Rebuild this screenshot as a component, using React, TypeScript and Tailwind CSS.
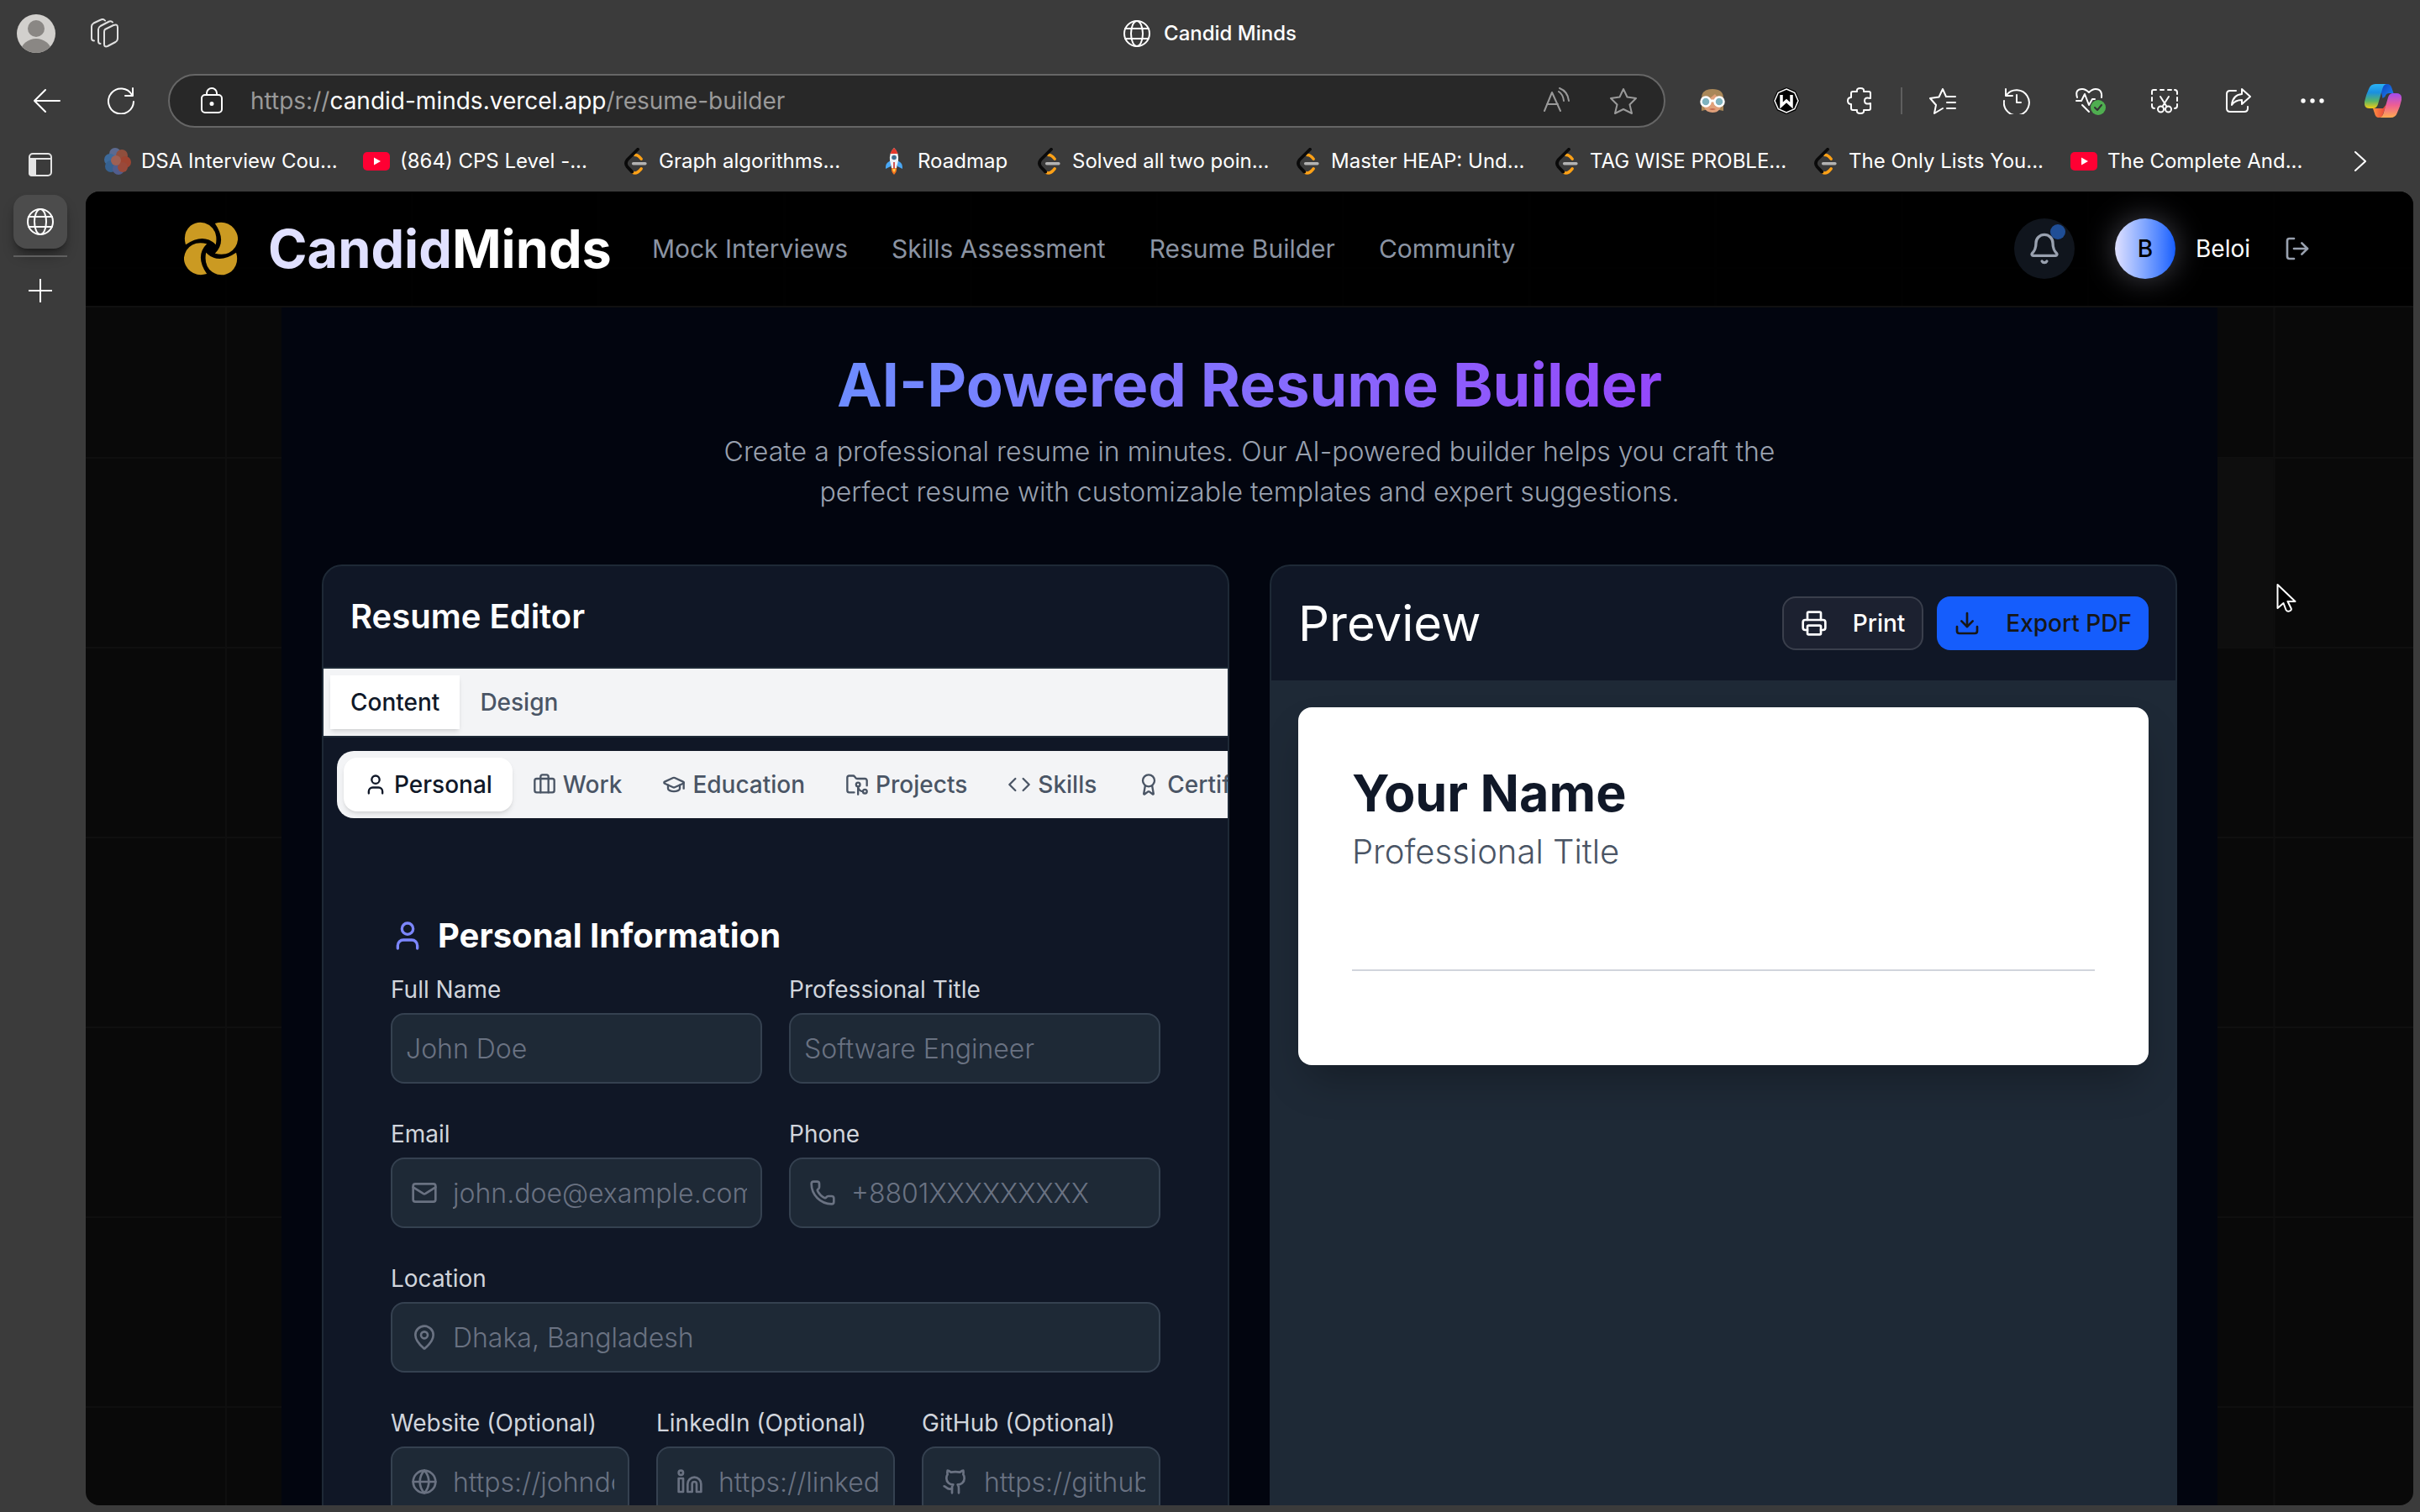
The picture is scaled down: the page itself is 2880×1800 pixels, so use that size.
import React, { useId } from 'react';
import type { ReactNode } from 'react';
import {
  Award,
  Bell,
  Briefcase,
  Code,
  Download,
  FolderGit2,
  Github,
  Globe,
  GraduationCap,
  Linkedin,
  LogOut,
  Mail,
  MapPin,
  Phone,
  Printer,
  User,
} from 'lucide-react';
import type { LucideIcon } from 'lucide-react';

interface IconProps {
  className?: string;
}

/* ---------- browser icons ---------- */

const LineIcon = ({ className = 'size-8', children }: { className?: string; children: ReactNode }) => (
  <svg
    viewBox="0 0 32 32"
    className={className}
    fill="none"
    stroke="currentColor"
    strokeWidth="2"
    strokeLinecap="round"
    strokeLinejoin="round"
    aria-hidden="true"
  >
    {children}
  </svg>
);

const GlobeIcon = ({ className }: IconProps) => (
  <LineIcon className={className}>
    <circle cx="16" cy="16" r="15" />
    <ellipse cx="16" cy="16" rx="7" ry="15" />
    <path d="M2 10h28M2 22h28" />
  </LineIcon>
);

const StackIcon = () => (
  <svg viewBox="0 0 36 36" className="size-9" fill="none" stroke="#e0e0e0" strokeWidth="2" strokeLinejoin="round" strokeLinecap="round" aria-hidden="true">
    <path d="M19 13 29 8q5-2 5 2.500v13q0 3-2.500 4.500L22 33q-4 1.500-4-2.500V16q0-2 1-3Z" />
    <path d="M13.500 30q-2.500 0-2.500-3V13q0-2.500 2.500-4L24 3.500q2.500-1 4 1" />
    <path d="M6 26.500q-3 0-3-3V9.500Q3 7 5.500 5.500L14 1.500q3-1.500 5 1" />
  </svg>
);

const AvatarIcon = () => (
  <svg viewBox="0 0 46 46" className="size-[46px]" aria-hidden="true">
    <clipPath id="avatar-clip">
      <circle cx="23" cy="23" r="23" />
    </clipPath>
    <g clipPath="url(#avatar-clip)">
      <rect width="46" height="46" fill="#d2d0cd" />
      <circle cx="23" cy="17" r="10" fill="#8a8784" />
      <ellipse cx="23" cy="44" rx="18" ry="15" fill="#8a8784" />
    </g>
  </svg>
);

const LeetCodeIcon = () => (
  <svg viewBox="-8 0 94 94" className="size-8 shrink-0" fill="none" strokeLinecap="round" strokeLinejoin="round" aria-hidden="true">
    <path d="M38 25q10-2 22 14M30 86q14 8 30-13" stroke="#ffa116" strokeWidth="10" />
    <path d="M48 5 11 42q-9 12 0 24l17 18" stroke="#0a0a0a" strokeWidth="11" />
    <path d="M32 55h42" stroke="#b3b3b3" strokeWidth="10" />
  </svg>
);

const YouTubeIcon = () => (
  <svg viewBox="0 0 32 32" className="size-8 shrink-0" aria-hidden="true">
    <rect y="5" width="32" height="22" rx="5" fill="#ff0033" />
    <path d="M13 11.500v9l8-4.500z" fill="#fff" />
  </svg>
);

const RocketIcon = () => (
  <svg viewBox="0 0 32 32" className="size-8 shrink-0" aria-hidden="true">
    <path d="M9 17c-3 2-3 5-3 8l6-3V15zM23 17c3 2 3 5 3 8l-6-3V15z" fill="#4aa8f5" />
    <path d="M13 23h6q1 5-3 9-4-4-3-9z" fill="#f5731d" />
    <path d="M14.500 24h3q.500 3-1.500 5-2-2-1.500-5z" fill="#ffd24d" />
    <path d="M16 0q6 6 5 15l-2 9h-6l-2-9Q10 6 16 0z" fill="#eef1f5" />
    <path d="M16 0q3.500 3 4.500 7h-9Q12.500 3 16 0z" fill="#e5392c" />
    <circle cx="16" cy="11.500" r="2.800" fill="#3f6d8f" />
    <path d="M15.200 17h1.600v8h-1.600z" fill="#c9302c" />
  </svg>
);

const FlowerIcon = () => (
  <svg viewBox="0 0 32 32" className="size-8 shrink-0" aria-hidden="true">
    <g opacity="0.7">
      <circle cx="13" cy="7" r="7" fill="#6a7fb5" />
      <circle cx="21" cy="9" r="7" fill="#b5583f" />
      <circle cx="25" cy="17" r="7" fill="#c9482e" />
      <circle cx="7" cy="14" r="7" fill="#3f7fc4" />
      <circle cx="8" cy="22" r="7" fill="#3572b5" />
      <circle cx="17" cy="25" r="7" fill="#5b6cb0" />
      <circle cx="22" cy="23" r="6" fill="#c2503a" />
      <circle cx="14" cy="15" r="6" fill="#c8705f" />
    </g>
  </svg>
);

const GlassesIcon = () => (
  <svg viewBox="0 0 32 32" className="size-8" aria-hidden="true">
    <path d="M3 28V13Q3 2 16 2t13 11v15l-5-1H7z" fill="#a98758" />
    <path d="M5 17q5-1 14-9 3 5 8 8 0 14-11 14T5 17z" fill="#e0a07a" />
    <path d="M12 26q4 2 8 0-4-2-8 0z" fill="#c56a4e" />
    <circle cx="8" cy="17" r="5.500" fill="#7fb3bf" stroke="#fff" strokeWidth="2.500" />
    <circle cx="24" cy="17" r="5.500" fill="#7fb3bf" stroke="#fff" strokeWidth="2.500" />
    <path d="M13 16h6" stroke="#fff" strokeWidth="3" />
  </svg>
);

const WappalIcon = () => (
  <svg viewBox="0 0 32 32" className="size-8" aria-hidden="true">
    <path d="M16 0l11 4.500L32 16l-5 11.500L16 32 5 27.500 0 16 5 4.500z" fill="#000" />
    <path d="M16 2l9.700 4.200L30 16l-4.300 9.800L16 30l-9.700-4.200L2 16l4.300-9.800z" fill="#000" stroke="#fff" strokeWidth="1.500" />
    <path d="M10 9v12.500l6-5.500 6 5.500V9" fill="none" stroke="#fff" strokeWidth="3.500" />
  </svg>
);

const CopilotIcon = () => (
  <svg viewBox="0 0 44 40" className="h-10 w-11" aria-hidden="true">
    <defs>
      <linearGradient id="cp-left" x1="0" y1="0" x2="0" y2="1">
        <stop offset="0" stopColor="#2bb3f5" />
        <stop offset="0.350" stopColor="#1a8fe0" />
        <stop offset="0.700" stopColor="#58b368" />
        <stop offset="1" stopColor="#f5cc12" />
      </linearGradient>
      <linearGradient id="cp-right" x1="0" y1="0" x2="0" y2="1">
        <stop offset="0" stopColor="#a24bef" />
        <stop offset="0.500" stopColor="#ef5f92" />
        <stop offset="1" stopColor="#ffac50" />
      </linearGradient>
      <linearGradient id="cp-top" x1="0" y1="0" x2="1" y2="1">
        <stop offset="0" stopColor="#0a3fc0" />
        <stop offset="1" stopColor="#2186f0" />
      </linearGradient>
      <linearGradient id="cp-bottom" x1="0" y1="0" x2="1" y2="0">
        <stop offset="0" stopColor="#ff9040" />
        <stop offset="1" stopColor="#e53d3a" />
      </linearGradient>
    </defs>
    <path d="M18 0h9q4 0 5.500 5l2 6h-5q-4 0-5 4l-3 2z" fill="url(#cp-top)" />
    <path d="M10 29h12l4-5-4 12q-1 4-5 4-4 0-5-5z" fill="url(#cp-bottom)" />
    <path d="M13 0h14q-4 0-5.500 5L16 24q-1.500 5-6 5H6q-7 0-6-8 2-9 5-15 2-6 8-6z" fill="url(#cp-left)" />
    <path d="M31 40H17q4 0 5.500-5L28 16q1.500-5 6-5h4q7 0 6 8-2 9-5 15-2 6-8 6z" fill="url(#cp-right)" />
  </svg>
);

const LogoIcon = () => (
  <svg viewBox="0 0 66 66" className="size-16" fill="#cb9a22" aria-hidden="true">
    <path d="M2 28Q-2 14 8 5 19-3 31 4q11 8 8 24Q24 13 2 28z" />
    <path d="M38 2Q52-2 61 8q9 11 2 23-8 12-25 8Q53 24 38 2z" />
    <path d="M64 38q4 14-6 23-11 8-23 1-11-8-8-24 15 15 37 0z" />
    <path d="M28 64Q14 68 5 58q-9-11-2-23 8-12 25-8Q13 42 28 64z" />
  </svg>
);

const ToolButton = ({ label, wide = 'w-22', children }: { label: string; wide?: string; children: ReactNode }) => (
  <button type="button" aria-label={label} className={`flex h-16 shrink-0 items-center justify-center ${wide}`}>
    {children}
  </button>
);

/* ---------- browser chrome ---------- */

const TitleBar = () => (
  <div className="grid h-20 shrink-0 grid-cols-[1fr_auto_1fr] items-center px-5">
    <div className="flex items-center gap-10">
      <button type="button" aria-label="Profile">
        <AvatarIcon />
      </button>
      <button type="button" aria-label="Workspaces">
        <StackIcon />
      </button>
    </div>
    <div className="flex items-center gap-4 text-2xl font-medium text-white">
      <GlobeIcon />
      <span>Candid Minds</span>
    </div>
  </div>
);

const Toolbar = () => (
  <div className="flex h-20 shrink-0 items-center pl-3 pr-1 text-white">
    <ToolButton label="Back">
      <LineIcon>
        <path d="M31 16H1M14 3 1 16l13 13" />
      </LineIcon>
    </ToolButton>
    <ToolButton label="Reload">
      <LineIcon>
        <path d="M29 9A15 15 0 1 0 31 17M30 1v9h-9" />
      </LineIcon>
    </ToolButton>
    <div className="mx-3 flex h-16 min-w-0 flex-1 items-center rounded-full border-2 border-[#666666] bg-[#282828] pl-[34px] pr-8">
      <LineIcon className="mr-[30px] size-8 shrink-0">
        <rect x="4" y="9" width="24" height="21" rx="4" />
        <path d="M10 9V7a6 6 0 0 1 12 0v2" />
        <circle cx="16" cy="19.500" r="1.500" fill="currentColor" />
      </LineIcon>
      <div className="min-w-0 flex-1 truncate text-[28px] text-[#9a9a9a]">
        https://<span className="text-white">candid-minds.vercel.app</span>/resume-builder
      </div>
      <div className="flex items-center gap-12 text-[#9a9a9a]">
        <button type="button" aria-label="Read aloud">
          <LineIcon>
            <path d="m2 28 9-22 10 22M5 20h13M19 5q5 3 6 11M20 1q10 4 11 15" />
          </LineIcon>
        </button>
        <button type="button" aria-label="Add to favorites">
          <LineIcon>
            <path d="m16 2 4.500 9.500L31 13l-7.500 7.500L26 31l-10-5-10 5 2.500-10.500L1 13l10.500-1.500z" />
          </LineIcon>
        </button>
      </div>
    </div>
    <ToolButton label="Reader extension">
      <GlassesIcon />
    </ToolButton>
    <ToolButton label="Web extension">
      <WappalIcon />
    </ToolButton>
    <ToolButton label="Extensions">
      <LineIcon>
        <path d="M5 7q0-2 2-2h5q-1-4 4-4t4 4h6q2 0 2 2v6q-7-2-7 3t7 3v6q0 2-2 2h-6q1 4-4 4t-4-4H7q-2 0-2-2v-5q-4 0-4-4t4-4z" />
      </LineIcon>
    </ToolButton>
    <div className="mx-1 h-8 w-0.5 shrink-0 bg-[#5f5f5f]" />
    <ToolButton label="Favorites">
      <LineIcon>
        <path d="M21 11h10M21 18h10M21 25h10M20 11l-4-9-4.500 9.500L1 13l7 8-2 10 10-6" />
      </LineIcon>
    </ToolButton>
    <ToolButton label="History">
      <LineIcon>
        <path d="M3 2v8h8M4 9A15 15 0 1 1 1 16M16 9v9h5" />
      </LineIcon>
    </ToolButton>
    <ToolButton label="Browser essentials">
      <svg viewBox="0 0 38 34" className="h-[34px] w-[38px]" fill="none" stroke="currentColor" strokeWidth="2" strokeLinecap="round" strokeLinejoin="round" aria-hidden="true">
        <path d="M3 13Q0 3 9 3q4 0 8 4 4-4 8-4 8 0 7 10M2 17h6l4-8 5 13 4-7h3M9 22l8 8" />
        <circle cx="28" cy="25" r="9" fill="#4fae50" stroke="none" />
        <path d="m24 25 3 3 5-6" stroke="#333" />
      </svg>
    </ToolButton>
    <ToolButton label="Screenshot">
      <LineIcon>
        <path d="M1 8V5q0-2 2-2h3M11 3h4M20 3h4M28 3q3 0 3 3v2M1 12v4M31 12v4M1 20v2q0 3 3 3M31 20v2q0 3-3 3M11 11l7 11M21 11l-7 11" />
        <circle cx="11.500" cy="26" r="3.500" />
        <circle cx="20.500" cy="26" r="3.500" />
      </LineIcon>
    </ToolButton>
    <ToolButton label="Share">
      <LineIcon>
        <path d="M13 4H6Q2 4 2 8v17q0 4 4 4h17q4 0 4-4v-2M20 2l10 9-10 9v-5q-8 0-12 6 1-12 12-13z" />
      </LineIcon>
    </ToolButton>
    <ToolButton label="Settings and more">
      <svg viewBox="0 0 32 32" className="size-8" fill="currentColor" aria-hidden="true">
        <circle cx="5" cy="16" r="2.700" />
        <circle cx="16" cy="16" r="2.700" />
        <circle cx="27" cy="16" r="2.700" />
      </svg>
    </ToolButton>
    <ToolButton label="Copilot" wide="w-20">
      <CopilotIcon />
    </ToolButton>
  </div>
);

const BOOKMARKS = [
  { label: 'DSA Interview Cou...', Icon: FlowerIcon, width: 'w-[274px]' },
  { label: '(864) CPS Level -...', Icon: YouTubeIcon, width: 'w-[274px]' },
  { label: 'Graph algorithms...', Icon: LeetCodeIcon, width: 'w-[274px]' },
  { label: 'Roadmap', Icon: RocketIcon, width: 'w-[150px]' },
  { label: 'Solved all two poin...', Icon: LeetCodeIcon, width: 'w-[274px]' },
  { label: 'Master HEAP: Und...', Icon: LeetCodeIcon, width: 'w-[274px]' },
  { label: 'TAG WISE PROBLE...', Icon: LeetCodeIcon, width: 'w-[274px]' },
  { label: 'The Only Lists You...', Icon: LeetCodeIcon, width: 'w-[274px]' },
  { label: 'The Complete And...', Icon: YouTubeIcon, width: 'w-[274px]' },
];

const BookmarksBar = () => (
  <nav aria-label="Bookmarks" className="flex h-[68px] shrink-0 items-center gap-[34px] pb-1 pl-[22px] pr-14">
    {BOOKMARKS.map(({ label, Icon, width }) => (
      <a key={label} href="#" className={`flex shrink-0 items-center gap-3 whitespace-nowrap text-2xl text-white ${width}`}>
        <Icon />
        <span>{label}</span>
      </a>
    ))}
    <button type="button" aria-label="More bookmarks" className="ml-auto text-white">
      <svg viewBox="0 0 14 26" className="h-[26px] w-3.5" fill="none" stroke="currentColor" strokeWidth="2" strokeLinecap="round" aria-hidden="true">
        <path d="m1 2 12 11L1 24" />
      </svg>
    </button>
  </nav>
);

const VerticalTabs = () => (
  <aside className="flex w-[102px] shrink-0 flex-col pl-4 text-white">
    <button type="button" aria-label="Tab actions" className="mt-1 flex size-16 items-center justify-center text-[#e4e4e4]">
      <svg viewBox="0 0 28 28" className="size-7" fill="none" stroke="currentColor" strokeWidth="2" aria-hidden="true">
        <rect x="1" y="1" width="26" height="26" rx="4" />
        <path d="M1 7h26" />
        <path d="M1 7h7v20H4q-3 0-3-3z" fill="currentColor" />
      </svg>
    </button>
    <button type="button" aria-label="Candid Minds tab" className="mt-1 flex size-16 items-center justify-center rounded-2xl bg-[#4c4c4c] shadow-lg shadow-black/40">
      <GlobeIcon />
    </button>
    <div className="mt-2 h-0.5 w-16 bg-[#5f5f5f]" />
    <button type="button" aria-label="New tab" className="mt-2 flex size-16 items-center justify-center">
      <svg viewBox="0 0 28 28" className="size-7" stroke="currentColor" strokeWidth="2" aria-hidden="true">
        <path d="M14 0v28M0 14h28" />
      </svg>
    </button>
  </aside>
);

/* ---------- page ---------- */

const NAV_LINKS = ['Mock Interviews', 'Skills Assessment', 'Resume Builder', 'Community'];

const SiteHeader = () => (
  <header className="relative flex h-[138px] shrink-0 items-center justify-between border-b-2 border-[#101010] bg-black/90 pl-[117px] pr-[122px]">
    <div className="flex items-center">
      <a href="#" className="flex items-center gap-9 text-[63px] font-bold leading-[76px] text-white">
        <LogoIcon />
        <span>
          <span className="text-[#e0e0ff]">Candid</span>Minds
        </span>
      </a>
      <nav className="ml-12 flex items-center gap-[52px]">
        {NAV_LINKS.map((link) => (
          <a key={link} href="#" className="text-[30px] leading-10 text-[#8b94a3]">
            {link}
          </a>
        ))}
      </nav>
    </div>
    <div className="flex items-center">
      <button type="button" aria-label="Notifications" className="relative flex size-18 items-center justify-center rounded-full bg-[#10151d] text-[#99a1af]">
        <Bell className="size-10" />
        <span className="absolute right-[11px] top-[7px] size-[18px] rounded-full bg-[#1f4e96]" />
      </button>
      <div className="ml-12 flex size-18 items-center justify-center rounded-full bg-linear-to-r from-[#e0e0ff] to-[#155dfc] text-[28px] font-medium text-black shadow-[0_0_36px_rgba(224,224,255,0.3)]">
        B
      </div>
      <span className="ml-6 text-[28px] leading-10 text-white">Beloi</span>
      <button type="button" aria-label="Log out" className="ml-10 text-[#99a1af]">
        <LogOut className="size-8" />
      </button>
    </div>
  </header>
);

const EDITOR_SECTIONS: { label: string; Icon: LucideIcon }[] = [
  { label: 'Personal', Icon: User },
  { label: 'Work', Icon: Briefcase },
  { label: 'Education', Icon: GraduationCap },
  { label: 'Projects', Icon: FolderGit2 },
  { label: 'Skills', Icon: Code },
  { label: 'Certifications', Icon: Award },
];

interface FieldProps {
  label: string;
  placeholder: string;
  type?: string;
  Icon?: LucideIcon;
}

const Field = ({ label, placeholder, type = 'text', Icon }: FieldProps) => {
  const id = useId();
  return (
    <div className="min-w-0">
      <label htmlFor={id} className="mb-2 block whitespace-nowrap text-[28px] leading-10 text-[#d1d5dc]">
        {label}
      </label>
      <div className="flex h-[84px] items-center rounded-2xl border-2 border-[#354150] bg-[#1e2936] px-4">
        {Icon && <Icon className="ml-1.5 mr-[18px] size-8 shrink-0 text-[#6a7282]" />}
        <input
          id={id}
          type={type}
          placeholder={placeholder}
          className="h-full w-full min-w-0 bg-transparent text-[32px] font-light text-white outline-none placeholder:text-[#6a7282]"
        />
      </div>
    </div>
  );
};

const ResumeEditor = () => (
  <section className="overflow-hidden rounded-3xl border-2 border-[#1e2936] bg-[#101726]">
    <div className="flex h-[122px] items-center border-b-2 border-[#1e2936] px-8">
      <h2 className="text-[40px] font-semibold leading-[56px] text-white">Resume Editor</h2>
    </div>
    <div role="tablist" className="flex h-[82px] border-b-2 border-[#1e2936] bg-[#f3f4f6] p-2">
      <button type="button" role="tab" aria-selected="true" className="bg-white px-6 text-[28px] font-medium text-[#101828] shadow-md">
        Content
      </button>
      <button type="button" role="tab" aria-selected="false" className="px-6 text-[28px] font-medium text-[#4a5565]">
        Design
      </button>
    </div>
    <div role="tablist" className="ml-4 mt-4 flex h-20 w-max rounded-[20px] bg-[#f3f4f6] p-2">
      {EDITOR_SECTIONS.map(({ label, Icon }, index) => (
        <button
          key={label}
          type="button"
          role="tab"
          aria-selected={index === 0}
          className={`flex items-center gap-2 px-6 text-[28px] font-medium ${
            index === 0 ? 'rounded-2xl bg-white text-[#101828] shadow-md' : 'text-[#4a5565]'
          }`}
        >
          <Icon className="size-7" />
          {label}
        </button>
      ))}
    </div>
    <form className="mt-28 px-20 pb-20">
      <h3 className="flex h-14 items-center gap-4 text-[40px] font-bold text-white">
        <User className="size-10 text-[#7c86ff]" />
        Personal Information
      </h3>
      <div className="mt-4 flex flex-col gap-10">
        <div className="grid grid-cols-2 gap-8">
          <Field label="Full Name" placeholder="John Doe" />
          <Field label="Professional Title" placeholder="Software Engineer" />
        </div>
        <div className="grid grid-cols-2 gap-8">
          <Field label="Email" placeholder="john.doe@example.com" type="email" Icon={Mail} />
          <Field label="Phone" placeholder="+8801XXXXXXXXX" type="tel" Icon={Phone} />
        </div>
        <Field label="Location" placeholder="Dhaka, Bangladesh" Icon={MapPin} />
        <div className="grid grid-cols-3 gap-8">
          <Field label="Website (Optional)" placeholder="https://johndoe.com" Icon={Globe} />
          <Field label="LinkedIn (Optional)" placeholder="https://linkedin.com/in/johndoe" Icon={Linkedin} />
          <Field label="GitHub (Optional)" placeholder="https://github.com/johndoe" Icon={Github} />
        </div>
      </div>
    </form>
  </section>
);

const ResumePreview = () => (
  <section className="flex flex-col overflow-hidden rounded-3xl border-2 border-[#1e2936] bg-[#101726]">
    <div className="flex h-[136px] shrink-0 items-center justify-between px-8">
      <h2 className="text-[58px] leading-[76px] text-white">Preview</h2>
      <div className="flex gap-4">
        <button type="button" className="flex h-16 items-center gap-[30px] rounded-2xl border-2 border-[#3a3f4c] bg-[#1c2130] px-5 text-[28px] font-medium text-white">
          <Printer className="size-8" />
          Print
        </button>
        <button type="button" className="flex h-16 items-center gap-[30px] rounded-2xl bg-[#155dfc] px-5 text-[28px] font-medium text-[#171717]">
          <Download className="size-8" />
          Export PDF
        </button>
      </div>
    </div>
    <div className="flex-1 bg-[#1e2936] p-8">
      <article className="rounded-2xl bg-white px-16 pb-28 pt-16 shadow-2xl shadow-black/30">
        <h1 className="text-[61px] font-bold leading-[76px] text-[#101828]">Your Name</h1>
        <p className="mt-1 text-[40px] font-light leading-[56px] text-[#4a5565]">Professional Title</p>
        <hr className="mt-28 border-t-2 border-[#d1d5dc]" />
      </article>
    </div>
  </section>
);

const App = () => (
  <div className="flex h-screen flex-col overflow-hidden bg-[#3b3b3b] font-['Inter',sans-serif]">
    <TitleBar />
    <Toolbar />
    <div className="flex min-h-0 flex-1">
      <VerticalTabs />
      <div className="flex min-w-0 flex-1 flex-col pb-2 pr-2">
        <BookmarksBar />
        <main className="relative flex min-h-0 flex-1 flex-col overflow-hidden rounded-2xl bg-[#090909]">
          <div className="absolute inset-0 bg-[linear-gradient(to_right,#0f0f0f_2px,transparent_2px),linear-gradient(to_bottom,#0f0f0f_2px,transparent_2px)] bg-[size:8%_226px] bg-[position:166px_90px]" />
          <div className="absolute right-[167px] top-[317px] h-[226px] w-[220px] bg-[#0e0e0e]" />
          <SiteHeader />
          <div className="relative mx-auto w-full max-w-[2304px] flex-1 bg-[#02050f] px-12 pt-[52px]">
            <div className="text-center">
              <h1 className="inline-block bg-linear-to-r from-[#6d8cff] to-[#9447fb] bg-clip-text text-[72px] font-bold leading-[80px] text-transparent">
                AI-Powered Resume Builder
              </h1>
              <p className="mx-auto mt-4 max-w-[1344px] text-[32px] font-light leading-[48px] text-[#99a1af]">
                Create a professional resume in minutes. Our AI-powered builder helps you craft the perfect resume with
                customizable templates and expert suggestions.
              </p>
            </div>
            <div className="mt-[62px] grid grid-cols-2 gap-12">
              <ResumeEditor />
              <ResumePreview />
            </div>
          </div>
          <svg viewBox="0 0 24 36" className="absolute right-[139px] top-[466px] h-9 w-6" fill="#000" stroke="#fff" strokeWidth="2" strokeLinejoin="round" aria-hidden="true">
            <path d="M1.500 2v28l7-6 3 8q2 3 5 1 2-1 1-3l-4-8h9z" />
          </svg>
        </main>
      </div>
    </div>
  </div>
);

export default App;
